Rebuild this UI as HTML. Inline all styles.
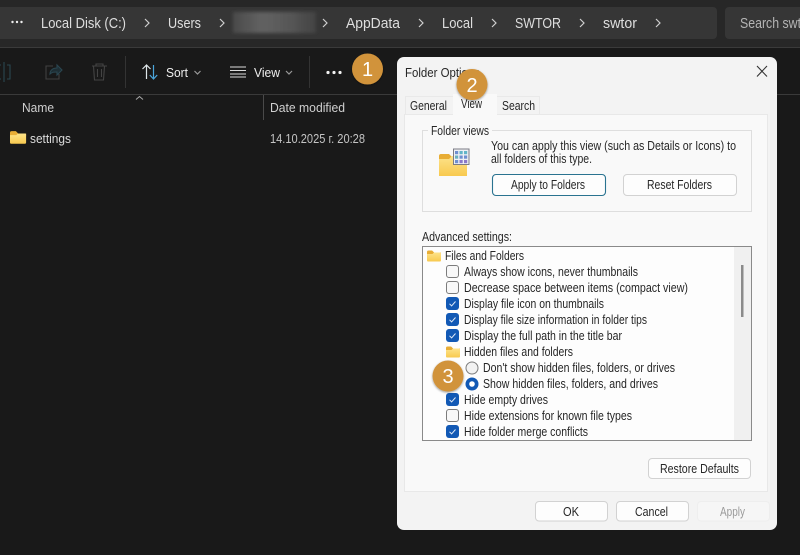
<!DOCTYPE html>
<html><head><meta charset="utf-8"><style>
html,body{margin:0;padding:0;background:#191919;width:800px;height:555px;overflow:hidden}
svg{display:block}
text{font-family:"Liberation Sans",sans-serif;white-space:pre}
.b{font-size:14.500px;fill:#dedede}
.t{font-size:12.500px;fill:#dcdcdc}
.d{font-size:12.500px;fill:#262626}
</style></head><body>
<svg width="800" height="555" viewBox="0 0 800 555" xmlns="http://www.w3.org/2000/svg">
<defs>
<linearGradient id="fold" x1="0" y1="0" x2="0" y2="1"><stop offset="0" stop-color="#fde38a"/><stop offset="1" stop-color="#f8c94e"/></linearGradient>
<linearGradient id="blur" x1="0" y1="0" x2="1" y2="0"><stop offset="0" stop-color="#4a4a4a"/><stop offset=".35" stop-color="#626262"/><stop offset=".7" stop-color="#565656"/><stop offset="1" stop-color="#434343"/></linearGradient>
<filter id="bl"><feGaussianBlur stdDeviation="1.500"/></filter>
<filter id="sh" x="-30%" y="-30%" width="160%" height="160%"><feDropShadow dx="0" dy="1" stdDeviation="1" flood-color="#000" flood-opacity=".4"/></filter>
<g id="fi"><path d="M0 2.500a1.500 1.500 0 0 1 1.500-1.500h3.600l2 2H14v2H0z" fill="#e8ad35"/><path d="M0 4.500h5.500l1.500-1.500h6a1 1 0 0 1 1 1v7a1 1 0 0 1-1 1H1a1 1 0 0 1-1-1z" fill="url(#fold)"/></g>
<g id="on"><rect x="0" y="0" width="13" height="13" rx="3" fill="#1259b5"/><path d="M3.500 6.800l2.100 2.100 3.900-4.400" fill="none" stroke="#dfe9f7" stroke-width="1"/></g>
<g id="off"><rect x=".5" y=".5" width="12" height="12" rx="2.500" fill="#f8f8f8" stroke="#7c7c7c"/></g>
</defs>
<rect width="800" height="555" fill="#191919"/>
<!-- top bar -->
<rect width="800" height="47" fill="#272727"/>
<rect x="0" y="47" width="800" height="1" fill="#3a3a3a"/>
<rect x="-6" y="7" width="723" height="32" rx="4" fill="#363636"/>
<rect x="725" y="7" width="90" height="32" rx="4" fill="#363636"/>
<circle cx="12.500" cy="22" r="1.200" fill="#eee"/><circle cx="17" cy="22" r="1.200" fill="#eee"/><circle cx="21.500" cy="22" r="1.200" fill="#eee"/>
<text class="b" x="41" y="28" textLength="85" lengthAdjust="spacingAndGlyphs">Local Disk (C:)</text>
<text class="b" x="168" y="28" textLength="33" lengthAdjust="spacingAndGlyphs">Users</text>
<rect x="233" y="12" width="83" height="21" fill="url(#blur)" filter="url(#bl)"/>
<text class="b" x="346" y="28" textLength="54" lengthAdjust="spacingAndGlyphs">AppData</text>
<text class="b" x="442" y="28" textLength="31" lengthAdjust="spacingAndGlyphs">Local</text>
<text class="b" x="515" y="28" textLength="46" lengthAdjust="spacingAndGlyphs">SWTOR</text>
<text class="b" x="603" y="28" textLength="34" lengthAdjust="spacingAndGlyphs">swtor</text>
<text class="b" x="740" y="28" textLength="72" lengthAdjust="spacingAndGlyphs" style="fill:#b4b4b4">Search swtor</text>
<g fill="none" stroke="#cfcfcf" stroke-width="1.200">
<path d="M145 19l4 4-4 4"/><path d="M220 19l4 4-4 4"/><path d="M323 19l4 4-4 4"/><path d="M419 19l4 4-4 4"/><path d="M492 19l4 4-4 4"/><path d="M580 19l4 4-4 4"/><path d="M656 19l4 4-4 4"/>
</g>
<!-- toolbar -->
<g fill="none" stroke-width="1.100">
<path d="M-2 65h3M7 65h3v14H7M1 79h-3M4 62v20" stroke="#2a4650"/>
<path d="M53 66h-7v13h13v-5" stroke="#414141"/><path d="M50 74c0-4 3-6 7-6v-3l5 5-5 5v-3c-3 0-5 0-7 2z" stroke="#2a4650" fill="#1e2e34"/>
<path d="M92 66h15M96 66v-2h7v2M93.500 66l1 14h9l1-14M97.500 69v8M101.500 69v8" stroke="#444"/>
</g>
<rect x="125" y="56" width="1" height="32" fill="#333"/>
<rect x="309" y="56" width="1" height="32" fill="#333"/>
<g fill="none" stroke-width="1.200">
<path d="M146.500 79V65M142.500 69l4-4 4 4" stroke="#dfe7ea"/>
<path d="M153.500 65v14M149.800 75l3.700 4 3.700-4" stroke="#4ba6dc"/>
<path d="M194.500 71l3 3 3-3" stroke="#999"/>
<path d="M230 67h16M230 70.500h16M230 74h16M230 77h16" stroke="#dcdcdc" stroke-width="1"/>
<path d="M286 71l3 3 3-3" stroke="#999"/>
</g>
<text x="166" y="77" class="t" textLength="22" lengthAdjust="spacingAndGlyphs" style="fill:#eee">Sort</text>
<text x="254" y="77" class="t" textLength="26" lengthAdjust="spacingAndGlyphs" style="fill:#eee">View</text>
<circle cx="328" cy="72.500" r="1.600" fill="#f2f2f2"/><circle cx="334" cy="72.500" r="1.600" fill="#f2f2f2"/><circle cx="340" cy="72.500" r="1.600" fill="#f2f2f2"/>
<rect x="0" y="94" width="800" height="1" fill="#3a3a3a"/>
<path d="M136 99.500l3.500-3 3.500 3" fill="none" stroke="#aaa"/>
<rect x="263" y="95" width="1" height="25" fill="#4a4a4a"/>
<text class="t" x="22" y="112" textLength="32" lengthAdjust="spacingAndGlyphs" style="fill:#cfcfcf">Name</text>
<text class="t" x="270" y="112" textLength="75" lengthAdjust="spacingAndGlyphs" style="fill:#cfcfcf">Date modified</text>
<use href="#fi" transform="translate(10,130) scale(1.150)"/>
<text class="t" x="30" y="143" textLength="41" lengthAdjust="spacingAndGlyphs">settings</text>
<text class="t" x="270" y="143" textLength="95" lengthAdjust="spacingAndGlyphs" style="fill:#c4c4c4">14.10.2025 г. 20:28</text>
<!-- dialog -->
<rect x="397" y="57" width="380" height="473" rx="7" fill="#f3f3f3"/>
<text class="d" x="405" y="77" textLength="75" lengthAdjust="spacingAndGlyphs">Folder Options</text>
<path d="M757 66l10 10.500M767 66l-10 10.500" stroke="#333" stroke-width="1.100" fill="none"/>
<rect x="404.500" y="114.500" width="363" height="377" fill="#f9f9f9" stroke="#e8e8e8"/>
<rect x="405.500" y="96.500" width="48" height="18" fill="#f3f3f3" stroke="#e9e9e9"/>
<rect x="496.500" y="96.500" width="43" height="18" fill="#f3f3f3" stroke="#e9e9e9"/>
<rect x="453" y="94" width="44" height="21.500" fill="#f9f9f9"/>
<text class="d" x="410" y="110" textLength="37" lengthAdjust="spacingAndGlyphs">General</text>
<text class="d" x="461" y="108" textLength="21" lengthAdjust="spacingAndGlyphs">View</text>
<text class="d" x="502" y="110" textLength="33" lengthAdjust="spacingAndGlyphs">Search</text>
<!-- folder views -->
<rect x="422.500" y="130.500" width="329" height="81" fill="none" stroke="#dedede"/>
<rect x="428" y="125" width="64" height="12" fill="#f9f9f9"/>
<text class="d" x="431" y="135" textLength="58" lengthAdjust="spacingAndGlyphs">Folder views</text>
<path d="M439 156a2 2 0 0 1 2-2h8l3 3h3v5h-16z" fill="#e8ad35"/>
<path d="M439 159h10l3-3h15v20h-28z" fill="url(#fold)"/>
<rect x="453.500" y="149" width="15.500" height="15.500" fill="#eef0f4" stroke="#7c7c85"/>
<g fill="#6f8fd0"><rect x="455" y="151" width="3.200" height="3.200"/><rect x="459.500" y="151" width="3.200" height="3.200" fill="#62b5c8"/><rect x="464" y="151" width="3.200" height="3.200" fill="#62b5c8"/><rect x="455" y="155.500" width="3.200" height="3.200" fill="#6ab0c0"/><rect x="459.500" y="155.500" width="3.200" height="3.200"/><rect x="464" y="155.500" width="3.200" height="3.200"/><rect x="455" y="160" width="3.200" height="3.200"/><rect x="459.500" y="160" width="3.200" height="3.200" fill="#8a78c8"/><rect x="464" y="160" width="3.200" height="3.200" fill="#8a78c8"/></g>
<text class="d" x="491" y="150" textLength="245" lengthAdjust="spacingAndGlyphs">You can apply this view (such as Details or Icons) to</text>
<text class="d" x="491" y="163" textLength="101" lengthAdjust="spacingAndGlyphs">all folders of this type.</text>
<rect x="492.500" y="174.500" width="113" height="21" rx="3.500" fill="#fdfdfd" stroke="#2a7390" stroke-width="1.100"/>
<rect x="623.500" y="174.500" width="113" height="21" rx="3.500" fill="#fdfdfd" stroke="#d2d2d2"/>
<text class="d" x="511" y="189" textLength="74" lengthAdjust="spacingAndGlyphs">Apply to Folders</text>
<text class="d" x="647" y="189" textLength="65" lengthAdjust="spacingAndGlyphs">Reset Folders</text>
<text class="d" x="422" y="241" textLength="90" lengthAdjust="spacingAndGlyphs">Advanced settings:</text>
<!-- list -->
<rect x="422.500" y="246.500" width="329" height="194" fill="#fdfdfd" stroke="#8a8a8a"/>
<rect x="734" y="247" width="17" height="193" fill="#f0f0f0"/>
<rect x="741" y="265" width="2.500" height="52" fill="#8a8a8a"/>
<use href="#fi" transform="translate(427,249.500)"/>
<text class="d" x="445" y="260" textLength="79" lengthAdjust="spacingAndGlyphs">Files and Folders</text>
<use href="#off" x="446" y="265"/>
<text class="d" x="464" y="276" textLength="174" lengthAdjust="spacingAndGlyphs">Always show icons, never thumbnails</text>
<use href="#off" x="446" y="281"/>
<text class="d" x="464" y="292" textLength="224" lengthAdjust="spacingAndGlyphs">Decrease space between items (compact view)</text>
<use href="#on" x="446" y="297"/>
<text class="d" x="464" y="308" textLength="140" lengthAdjust="spacingAndGlyphs">Display file icon on thumbnails</text>
<use href="#on" x="446" y="313"/>
<text class="d" x="464" y="324" textLength="183" lengthAdjust="spacingAndGlyphs">Display file size information in folder tips</text>
<use href="#on" x="446" y="329"/>
<text class="d" x="464" y="340" textLength="158" lengthAdjust="spacingAndGlyphs">Display the full path in the title bar</text>
<use href="#fi" transform="translate(446,345.500)"/>
<text class="d" x="464" y="356" textLength="109" lengthAdjust="spacingAndGlyphs">Hidden files and folders</text>
<circle cx="472" cy="368" r="6" fill="#f2f2f2" stroke="#7c7c7c"/>
<text class="d" x="483" y="372" textLength="192" lengthAdjust="spacingAndGlyphs">Don't show hidden files, folders, or drives</text>
<circle cx="472" cy="384" r="6.500" fill="#1259b5"/><circle cx="472" cy="384" r="2.800" fill="#fff"/>
<text class="d" x="483" y="388" textLength="175" lengthAdjust="spacingAndGlyphs">Show hidden files, folders, and drives</text>
<use href="#on" x="446" y="393"/>
<text class="d" x="464" y="404" textLength="84" lengthAdjust="spacingAndGlyphs">Hide empty drives</text>
<use href="#off" x="446" y="409"/>
<text class="d" x="464" y="420" textLength="168" lengthAdjust="spacingAndGlyphs">Hide extensions for known file types</text>
<use href="#on" x="446" y="425"/>
<text class="d" x="464" y="436" textLength="124" lengthAdjust="spacingAndGlyphs">Hide folder merge conflicts</text>
<!-- buttons -->
<rect x="648.500" y="458.500" width="102" height="20" rx="3.500" fill="#fdfdfd" stroke="#d2d2d2"/>
<text class="d" x="660" y="473" textLength="79" lengthAdjust="spacingAndGlyphs">Restore Defaults</text>
<rect x="535.500" y="501.500" width="72" height="19.500" rx="3.500" fill="#fdfdfd" stroke="#d2d2d2"/>
<text class="d" x="563" y="516" textLength="16" lengthAdjust="spacingAndGlyphs">OK</text>
<rect x="616.500" y="501.500" width="72" height="19.500" rx="3.500" fill="#fdfdfd" stroke="#d2d2d2"/>
<text class="d" x="635" y="516" textLength="33" lengthAdjust="spacingAndGlyphs">Cancel</text>
<rect x="697.500" y="501.500" width="72" height="19.500" rx="3.500" fill="#f6f6f6" stroke="#eeeeee"/>
<text class="d" x="720" y="516" textLength="25" lengthAdjust="spacingAndGlyphs" style="fill:#9a9a9a">Apply</text>
<!-- callouts -->
<g filter="url(#sh)">
<circle cx="367.500" cy="69" r="15.500" fill="#d1933a"/>
<circle cx="472" cy="84.500" r="15.500" fill="#d1933a"/>
<circle cx="448" cy="376" r="15.500" fill="#d1933a"/>
</g>
<g style="font-size:20px" text-anchor="middle" fill="#fff">
<text x="367.500" y="76" fill="#fff">1</text>
<text x="472" y="92" fill="#fff">2</text>
<text x="448" y="383" fill="#fff">3</text>
</g>
</svg>
</body></html>
